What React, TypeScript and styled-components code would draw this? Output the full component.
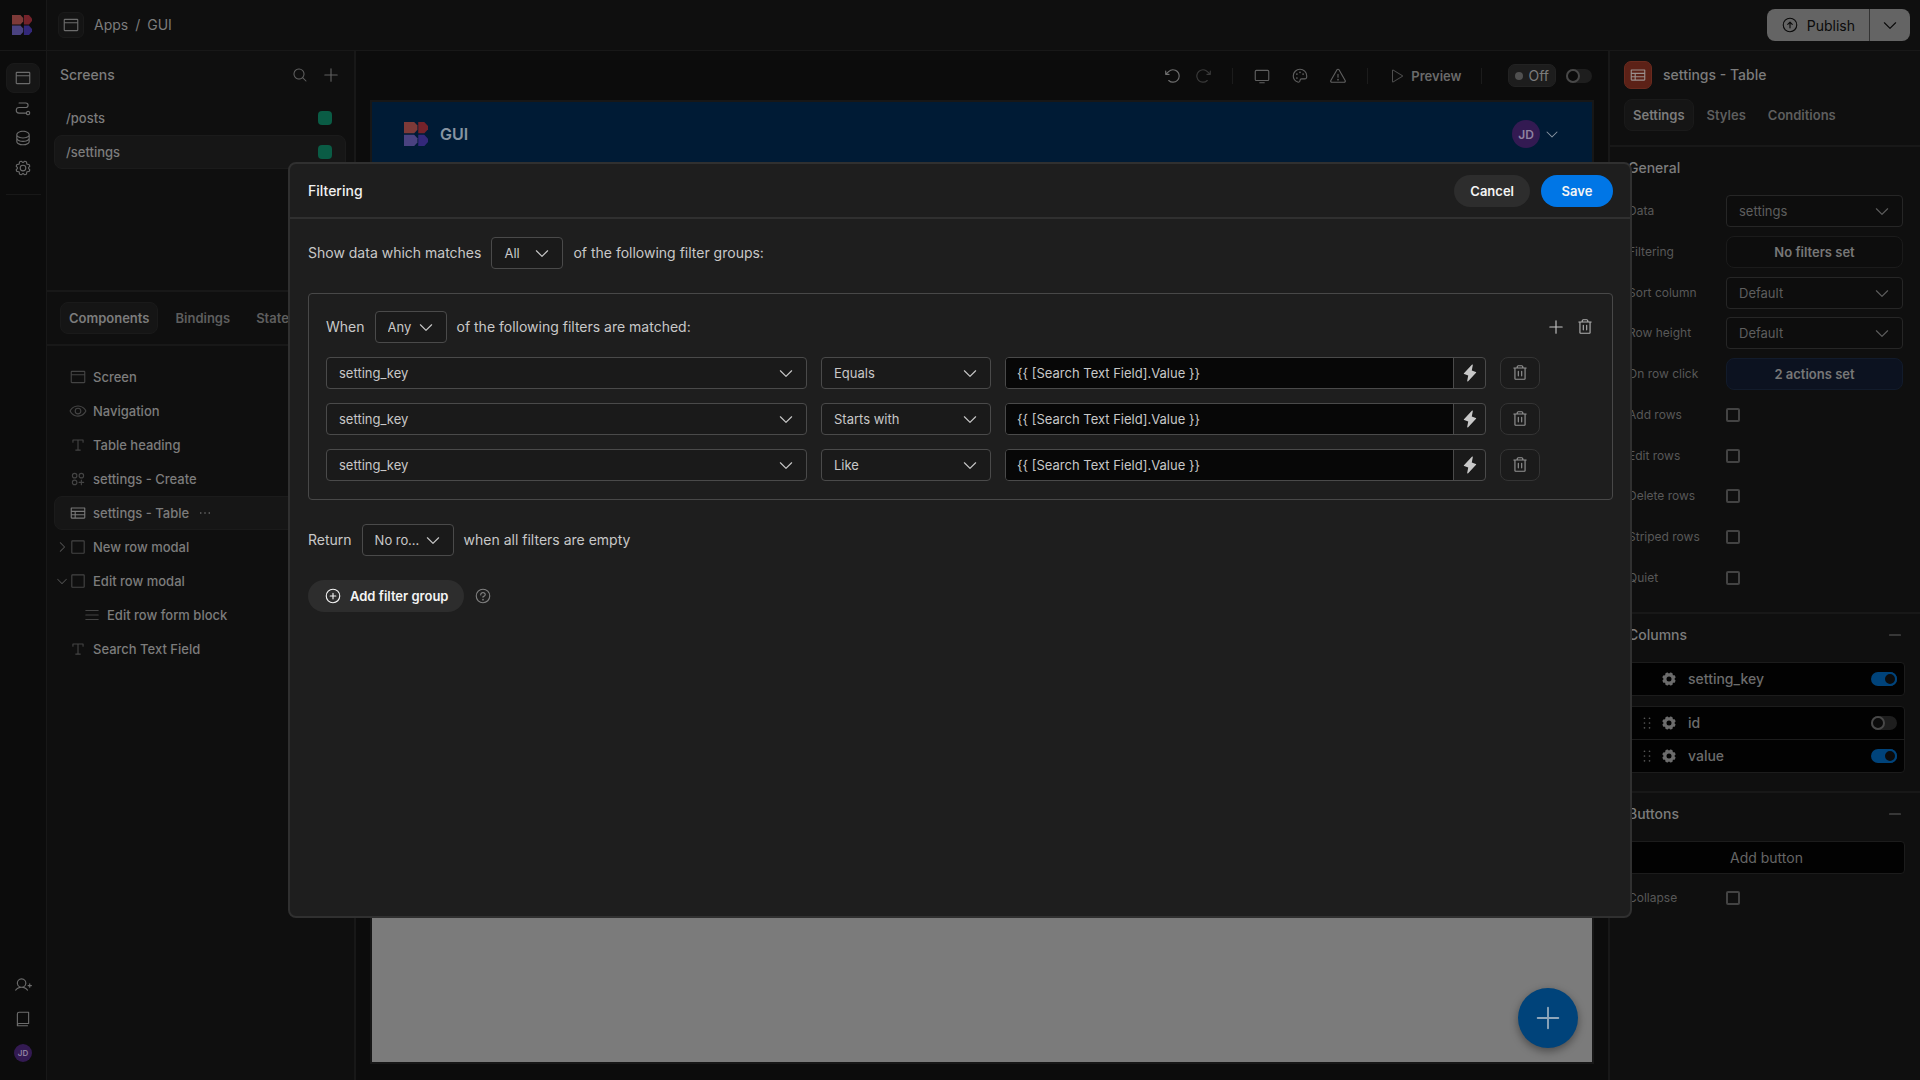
import React from "react";
import styled, { createGlobalStyle, css } from "styled-components";
import {
  PiBrowser, PiPath, PiDatabase, PiGear, PiMagnifyingGlass, PiPlus, PiEye, PiTextT,
  PiCirclesThreePlus, PiTable, PiSquare, PiCaretRight, PiCaretDown, PiList, PiUserPlus,
  PiBook, PiArrowCounterClockwise, PiArrowClockwise, PiMonitor, PiPalette, PiWarning,
  PiPlay, PiArrowCircleUp, PiTrash, PiPlusCircle, PiQuestion, PiDotsThree, PiMinus,
  PiLightningFill, PiGearFill, PiDotsSixVertical,
} from "react-icons/pi";

const Global = createGlobalStyle`
  *, *::before, *::after { box-sizing: border-box; }
  body { margin: 0; background: #0b0b0b; overflow: hidden; }
  body, button, input, select { font-family: Inter, "Liberation Sans", sans-serif; }
  button, input, select { margin: 0; font-size: 13px; color: inherit; }
  button { display: flex; align-items: center; justify-content: center; padding: 0; background: none; border: 0; cursor: pointer; }
  h1, h2, ul, p { margin: 0; padding: 0; font-weight: 500; list-style: none; }
  svg { flex: none; }
`;

const line = "#181818";

const Shell = styled.div`
  display: grid;
  grid-template-columns: 47px 1fr;
  height: 100vh;
  color: #7c7c7c;
  font-size: 14px;
  line-height: 18px;
`;

/* ---------- Navigation rail ---------- */

const Rail = styled.nav`
  display: flex;
  flex-direction: column;
  align-items: center;
  background: #0c0c0c;
  border-right: 1px solid ${line};
  padding-bottom: 18px;
`;
const RailLogo = styled.div`
  display: flex;
  align-items: center;
  justify-content: center;
  align-self: stretch;
  height: 51px;
  padding-right: 2px;
  border-bottom: 1px solid ${line};
  margin-bottom: 12px;
`;
const RailButton = styled.button<{ $active?: boolean }>`
  width: 34px;
  height: 30px;
  border-radius: 8px;
  border: 1px solid transparent;
  color: #6c6c6c;
  font-size: 18px;
  ${(p) => p.$active && css`background: #161616; border-color: #1a1a1a;`}
`;
const RailRule = styled.div`
  width: 35px;
  height: 1px;
  margin: 11px 0 auto;
  background: ${line};
`;
const RailFoot = styled.div`
  display: flex;
  flex-direction: column;
  align-items: center;
  gap: 4px;
  & > span { margin-top: 6px; }
`;
const Avatar = styled.span<{ $size: number }>`
  display: flex;
  align-items: center;
  justify-content: center;
  width: ${(p) => p.$size}px;
  height: ${(p) => p.$size}px;
  border-radius: 50%;
  background: #331a52;
  color: #8e82a0;
  font-size: ${(p) => (p.$size > 20 ? 12 : 8)}px;
  font-weight: 600;
`;

/* ---------- Top bar ---------- */

const Main = styled.div`
  display: flex;
  flex-direction: column;
  min-width: 0;
`;
const TopBar = styled.header`
  display: flex;
  align-items: center;
  justify-content: space-between;
  flex: none;
  height: 51px;
  padding: 0 10px 0 11px;
  background: #0f0f0f;
  border-bottom: 1px solid ${line};
`;
const Crumbs = styled.div`
  display: flex;
  align-items: center;
  gap: 7px;
`;
const CrumbIcon = styled.span`
  display: flex;
  align-items: center;
  justify-content: center;
  width: 26px;
  height: 26px;
  margin-right: 3px;
  border: 1px solid #1a1a1a;
  border-radius: 6px;
  background: #141414;
  font-size: 18px;
  color: #6c6c6c;
`;
const CrumbLink = styled.a`
  color: #7c7c7c;
  text-decoration: none;
`;
const PublishGroup = styled.div`
  display: flex;
  border-radius: 8px;
  overflow: hidden;
  background: #646464;
  color: #0a0a0a;
`;
const PublishButton = styled.button`
  gap: 8px;
  height: 32px;
  padding: 0 14px;
  font-size: 14px;
  & > svg { font-size: 18px; }
  & + & { padding: 0 11px; border-left: 1px solid #333; }
`;

const Workspace = styled.div`
  display: grid;
  grid-template-columns: 309px 1fr 312px;
  flex: 1;
  min-height: 0;
`;

/* ---------- Left panel ---------- */

const LeftPanel = styled.aside`
  display: flex;
  flex-direction: column;
  min-height: 0;
  background: #0f0f0f;
  border-right: 2px solid ${line};
`;
const Screens = styled.section`
  height: 241px;
  border-bottom: 2px solid ${line};
`;
const PanelHead = styled.div`
  display: flex;
  align-items: center;
  gap: 14px;
  height: 48px;
  padding: 0 14px 0 13px;
  margin-bottom: 2px;
`;
const PanelTitle = styled.h2`
  flex: 1;
  font-size: 14px;
`;
const IconButton = styled.button<{ $tone?: string }>`
  font-size: 18px;
  color: ${(p) => p.$tone ?? "#606060"};
`;
const List = styled.ul`
  padding: 0 8px 0 7px;
`;
const ScreenRow = styled.li<{ $active?: boolean }>`
  display: flex;
  align-items: center;
  justify-content: space-between;
  height: 34px;
  padding: 0 13px 0 11px;
  border: 1px solid transparent;
  border-radius: 8px;
  font-size: 13px;
  ${(p) => p.$active && css`background: #161616; border-color: #1b1b1b;`}
`;
const Swatch = styled.span`
  width: 14px;
  height: 14px;
  border-radius: 4px;
  background: #0a5c45;
`;
const Tabs = styled.div`
  display: flex;
  gap: 8px;
  padding: 10px 13px;
  border-bottom: 2px solid ${line};
`;
const Tab = styled.button<{ $active?: boolean }>`
  height: 32px;
  padding: 0 8px;
  border: 1px solid transparent;
  border-radius: 8px;
  font-weight: 600;
  color: #5e5e5e;
  ${(p) => p.$active && css`color: #7c7c7c; background: #151515; border-color: #1a1a1a;`}
`;
const Tree = styled(List)`
  padding-top: 14px;
`;
const TreeRow = styled.li<{ $active?: boolean; $depth?: number }>`
  display: flex;
  align-items: center;
  height: 34px;
  padding-left: ${(p) => (p.$depth ?? 0) * 14}px;
  border: 1px solid transparent;
  border-radius: 8px;
  font-size: 13px;
  ${(p) => p.$active && css`background: #161616; border-color: #1b1b1b;`}
`;
const Twisty = styled.span`
  display: flex;
  width: 14px;
  font-size: 14px;
  color: #505050;
`;
const NodeIcon = styled.span<{ $bright?: boolean }>`
  display: flex;
  margin-right: 6px;
  font-size: 18px;
  color: ${(p) => (p.$bright ? "#777" : "#444")};
`;
const NodeMore = styled.span`
  display: flex;
  margin-left: 8px;
  font-size: 16px;
`;

/* ---------- Canvas ---------- */

const CanvasArea = styled.main`
  display: flex;
  flex-direction: column;
  min-width: 0;
  padding: 0 14px 16px;
  background: #0c0c0c;
`;
const Toolbar = styled.div`
  display: flex;
  align-items: center;
  justify-content: flex-end;
  height: 49px;
  padding-right: 2px;
`;
const ToolGroup = styled.div<{ $gap: number }>`
  display: flex;
  align-items: center;
  gap: ${(p) => p.$gap}px;
`;
const ToolRule = styled.span`
  width: 1px;
  height: 16px;
  margin: 0 20px;
  background: #1c1c1c;
`;
const PreviewButton = styled.button`
  gap: 7px;
  font-weight: 600;
  color: #6a6a6a;
  & > svg { font-size: 16px; color: #4e4e4e; }
`;
const OffBadge = styled.span`
  display: flex;
  align-items: center;
  gap: 5px;
  height: 23px;
  padding: 0 6px;
  margin: 0 10px 0 6px;
  border-radius: 7px;
  border: 1px solid #222;
  background: #1d1d1d;
  &::before { content: ""; width: 8px; height: 8px; border-radius: 50%; background: #505050; }
`;
const Toggle = styled.input.attrs({ type: "checkbox", role: "switch" })`
  appearance: none;
  display: flex;
  flex: none;
  width: 26px;
  height: 14px;
  border-radius: 7px;
  background: #1e1e1e;
  &::before {
    content: "";
    width: 14px;
    height: 14px;
    border: 2px solid #484848;
    border-radius: 50%;
    background: #0b0b0b;
  }
  &:checked { background: #00437a; justify-content: flex-end; }
  &:checked::before { border-color: #00437a; }
`;
const Device = styled.div`
  position: relative;
  flex: 1;
  border: 2px solid #171717;
  background: #7b7b7b;
`;
const AppHeader = styled.div`
  display: flex;
  align-items: center;
  gap: 12px;
  height: 64px;
  padding: 0 32px;
  background: #001b35;
  color: #8794a1;
  font-size: 16px;
  font-weight: 600;
`;
const UserMenu = styled.button`
  gap: 4px;
  margin-left: auto;
  font-size: 16px;
`;
const Fab = styled.button`
  position: absolute;
  right: 14px;
  bottom: 14px;
  width: 60px;
  height: 60px;
  border-radius: 50%;
  background: #00437a;
  color: #8fa6ba;
  font-size: 30px;
  box-shadow: 0 3px 8px rgba(0, 0, 0, 0.4);
`;

/* ---------- Settings panel ---------- */

const RightPanel = styled.aside`
  min-height: 0;
  background: #0f0f0f;
  border-left: 2px solid ${line};
`;
const ComponentHead = styled.div`
  display: flex;
  align-items: center;
  gap: 11px;
  padding: 10px 14px 0;
`;
const ComponentIcon = styled.span`
  display: flex;
  align-items: center;
  justify-content: center;
  width: 28px;
  height: 28px;
  border: 1px solid #6a2a1e;
  border-radius: 7px;
  background: #5c2117;
  color: #9a8f8d;
  font-size: 18px;
`;
const ComponentTabs = styled(Tabs)`
  gap: 4px;
  padding: 10px 14px 14px;
`;
const Section = styled.section`
  padding: 0 15px 18px 18px;
  border-bottom: 2px solid ${line};
  &:last-child { border-bottom: 0; }
`;
const SectionHead = styled.div`
  display: flex;
  align-items: center;
  justify-content: space-between;
  height: 42px;
  padding-right: 2px;
  margin-bottom: 6px;
`;
const Fields = styled.div`
  display: flex;
  flex-direction: column;
  justify-content: space-between;
  min-height: 399px;
`;
const Field = styled.div`
  display: grid;
  grid-template-columns: 98px 1fr;
  align-items: center;
  min-height: 32px;
  padding-right: 2px;
`;
const FieldLabel = styled.label`
  font-size: 12px;
  color: #585858;
`;
const Checkbox = styled.input.attrs({ type: "checkbox" })`
  appearance: none;
  width: 14px;
  height: 14px;
  border: 2px solid #434343;
  border-radius: 2px;
`;
const FieldButton = styled.button<{ $blue?: boolean }>`
  height: 32px;
  border: 1px solid ${(p) => (p.$blue ? "#121b2b" : "#1b1b1b")};
  border-radius: 8px;
  background: ${(p) => (p.$blue ? "#0c1220" : "#0d0d0d")};
  color: #777;
  font-weight: 600;
`;
const ColumnList = styled.ul`
  margin-bottom: 10px;
  border: 1px solid #1c1c1c;
  border-radius: 4px;
  background: #020202;
  &:last-child { margin-bottom: 0; }
`;
const ColumnRow = styled.li`
  display: flex;
  align-items: center;
  height: 32px;
  padding: 0 7px 0 9px;
  & + & { height: 33px; border-top: 1px solid #1c1c1c; }
`;
const Grip = styled.span`
  display: flex;
  width: 23px;
  font-size: 18px;
  color: #555;
`;
const ColumnName = styled.label`
  flex: 1;
  padding-left: 11px;
  color: #6c6c6c;
`;
const AddButton = styled.button`
  width: 100%;
  height: 33px;
  margin-bottom: 8px;
  border: 1px solid #1c1c1c;
  border-radius: 4px;
  background: #020202;
  font-size: 14px;
  color: #666;
`;

/* ---------- Select ---------- */

const SelectBox = styled.div<{ $width?: number; $dim?: boolean }>`
  display: grid;
  align-items: center;
  width: ${(p) => (p.$width ? `${p.$width}px` : "auto")};
  color: ${(p) => (p.$dim ? "#5e5e5e" : "#c8c8c8")};
  & > * { grid-area: 1 / 1; }
  & > svg { justify-self: end; margin-right: 12px; font-size: 18px; pointer-events: none; }
  & > select {
    appearance: none;
    width: 100%;
    height: 32px;
    padding: 0 32px 0 12px;
    border: 1px solid ${(p) => (p.$dim ? "#262626" : "#4a4a4a")};
    border-radius: 4px;
    background: ${(p) => (p.$dim ? "#0d0d0d" : "#1a1a1a")};
    text-overflow: ellipsis;
  }
`;

/* ---------- Modal ---------- */

const Overlay = styled.div`
  position: fixed;
  inset: 0;
  display: flex;
  align-items: center;
  justify-content: center;
`;
const Dialog = styled.div`
  width: 70vw;
  height: 70vh;
  border: 2px solid #303030;
  border-radius: 8px;
  background: #1e1e1e;
  color: #c8c8c8;
  font-size: 14px;
  line-height: 18px;
`;
const DialogHead = styled.div`
  display: flex;
  align-items: center;
  gap: 11px;
  height: 55px;
  padding: 0 17px 0 18px;
  border-bottom: 2px solid #303030;
`;
const DialogTitle = styled.h1`
  flex: 1;
  font-size: 14px;
  color: #f0f0f0;
`;
const Pill = styled.button<{ $primary?: boolean }>`
  gap: 8px;
  min-width: 72px;
  height: 32px;
  padding: 0 16px;
  border-radius: 16px;
  background: ${(p) => (p.$primary ? "#0076e6" : "#2d2d2d")};
  color: #f4f4f4;
  font-weight: 600;
  & > svg { font-size: 18px; }
`;
const DialogBody = styled.div`
  display: flex;
  flex-direction: column;
  gap: 24px;
  padding: 18px 17px 18px 18px;
`;
const Sentence = styled.div`
  display: flex;
  align-items: center;
  gap: 10px;
`;
const Group = styled.div`
  display: flex;
  flex-direction: column;
  gap: 14px;
  padding: 17px 18px 18px 17px;
  border: 1px solid #484848;
  border-radius: 4px;
`;
const GroupActions = styled.div`
  display: flex;
  gap: 11px;
  margin-left: auto;
`;
const Filter = styled.div`
  display: grid;
  grid-template-columns: 1fr 170px 1fr 40px 40px;
  gap: 14px;
`;
const Binding = styled.div`
  display: flex;
  height: 32px;
  border: 1px solid #4a4a4a;
  border-radius: 4px;
  background: #1a1a1a;
  overflow: hidden;
  & > input {
    flex: 1;
    min-width: 0;
    padding: 0 11px;
    border: 0;
    background: #070707;
  }
  & > button { width: 32px; border-left: 1px solid #4a4a4a; font-size: 18px; }
`;
const TrashButton = styled.button`
  height: 32px;
  border: 1px solid #343434;
  border-radius: 8px;
  background: #1b1b1b;
  font-size: 18px;
  color: #949494;
`;

/* ---------- Pieces ---------- */

function Logo({ size }: { size: number }) {
  return (
    <svg width={size} height={size} viewBox="0 0 20 20" aria-hidden="true">
      <path d="M0 0h8.5L11.2 3v3.4L8.5 9.4H0z" fill="#7d3a38" />
      <path d="M11.9 0h5L20 3.4v2.6L17 9.4h-5.1z" fill="#74222a" />
      <path d="M0 10.6h8.5l2.7 3V17l-2.7 3H0z" fill="#4a4280" />
      <path d="M11.9 10.6h5L20 14v2.6L17 20h-5.1z" fill="#33287a" />
    </svg>
  );
}

type SelectProps = { label: string; value: string; id?: string; width?: number; dim?: boolean };
function Select({ label, value, id, width, dim }: SelectProps) {
  return (
    <SelectBox $width={width} $dim={dim}>
      <select id={id} aria-label={label} defaultValue={value}>
        <option>{value}</option>
      </select>
      <PiCaretDown />
    </SelectBox>
  );
}

const nodes = [
  { name: "Screen", icon: <PiBrowser /> },
  { name: "Navigation", icon: <PiEye /> },
  { name: "Table heading", icon: <PiTextT /> },
  { name: "settings - Create", icon: <PiCirclesThreePlus /> },
  { name: "settings - Table", icon: <PiTable />, active: true },
  { name: "New row modal", icon: <PiSquare />, twisty: <PiCaretRight /> },
  { name: "Edit row modal", icon: <PiSquare />, twisty: <PiCaretDown /> },
  { name: "Edit row form block", icon: <PiList />, depth: 1 },
  { name: "Search Text Field", icon: <PiTextT /> },
];

const flags = ["Add rows", "Edit rows", "Delete rows", "Striped rows", "Quiet"];

function CheckField({ name }: { name: string }) {
  return (
    <Field>
      <FieldLabel htmlFor={name}>{name}</FieldLabel>
      <Checkbox id={name} />
    </Field>
  );
}

function Column({ name, on, fixed }: { name: string; on?: boolean; fixed?: boolean }) {
  return (
    <ColumnRow>
      <Grip>{!fixed && <PiDotsSixVertical />}</Grip>
      <IconButton aria-label={`Edit ${name}`} $tone="#6c6c6c"><PiGearFill size={16} /></IconButton>
      <ColumnName htmlFor={`col-${name}`}>{name}</ColumnName>
      <Toggle id={`col-${name}`} defaultChecked={on} />
    </ColumnRow>
  );
}

export default function App() {
  return (
    <>
      <Global />
      <Shell>
        <Rail>
          <RailLogo><Logo size={20} /></RailLogo>
          <RailButton $active aria-label="Design"><PiBrowser /></RailButton>
          <RailButton aria-label="Automations"><PiPath /></RailButton>
          <RailButton aria-label="Data"><PiDatabase /></RailButton>
          <RailButton aria-label="Settings"><PiGear /></RailButton>
          <RailRule />
          <RailFoot>
            <RailButton aria-label="Invite"><PiUserPlus /></RailButton>
            <RailButton aria-label="Docs"><PiBook /></RailButton>
            <Avatar $size={18}>JD</Avatar>
          </RailFoot>
        </Rail>

        <Main>
          <TopBar>
            <Crumbs>
              <CrumbIcon><PiBrowser /></CrumbIcon>
              <CrumbLink href="#apps">Apps</CrumbLink>
              <span>/</span>
              <span>GUI</span>
            </Crumbs>
            <PublishGroup>
              <PublishButton><PiArrowCircleUp />Publish</PublishButton>
              <PublishButton aria-label="Publish options"><PiCaretDown /></PublishButton>
            </PublishGroup>
          </TopBar>

          <Workspace>
            <LeftPanel>
              <Screens>
                <PanelHead>
                  <PanelTitle>Screens</PanelTitle>
                  <IconButton aria-label="Search"><PiMagnifyingGlass size={16} /></IconButton>
                  <IconButton aria-label="Add screen"><PiPlus /></IconButton>
                </PanelHead>
                <List>
                  <ScreenRow>/posts<Swatch /></ScreenRow>
                  <ScreenRow $active>/settings<Swatch /></ScreenRow>
                </List>
              </Screens>
              <Tabs>
                <Tab $active>Components</Tab>
                <Tab>Bindings</Tab>
                <Tab>State</Tab>
              </Tabs>
              <Tree>
                {nodes.map((n) => (
                  <TreeRow key={n.name} $active={n.active} $depth={n.depth}>
                    <Twisty>{n.twisty}</Twisty>
                    <NodeIcon $bright={n.active}>{n.icon}</NodeIcon>
                    {n.name}
                    {n.active && <NodeMore><PiDotsThree /></NodeMore>}
                  </TreeRow>
                ))}
              </Tree>
            </LeftPanel>

            <CanvasArea>
              <Toolbar>
                <ToolGroup $gap={12}>
                  <IconButton aria-label="Undo" $tone="#707070"><PiArrowCounterClockwise /></IconButton>
                  <IconButton aria-label="Redo" $tone="#3a3a3a"><PiArrowClockwise /></IconButton>
                </ToolGroup>
                <ToolRule />
                <ToolGroup $gap={20}>
                  <IconButton aria-label="Screen size"><PiMonitor /></IconButton>
                  <IconButton aria-label="Theme"><PiPalette /></IconButton>
                  <IconButton aria-label="Errors"><PiWarning /></IconButton>
                </ToolGroup>
                <ToolRule />
                <PreviewButton><PiPlay />Preview</PreviewButton>
                <ToolRule />
                <OffBadge>Off</OffBadge>
                <Toggle aria-label="Live" />
              </Toolbar>
              <Device>
                <AppHeader>
                  <Logo size={24} />
                  GUI
                  <UserMenu aria-label="User menu"><Avatar $size={28}>JD</Avatar><PiCaretDown /></UserMenu>
                </AppHeader>
                <Fab aria-label="Add"><PiPlus /></Fab>
              </Device>
            </CanvasArea>

            <RightPanel>
              <ComponentHead>
                <ComponentIcon><PiTable /></ComponentIcon>
                <PanelTitle>settings - Table</PanelTitle>
              </ComponentHead>
              <ComponentTabs>
                <Tab $active>Settings</Tab>
                <Tab>Styles</Tab>
                <Tab>Conditions</Tab>
              </ComponentTabs>
              <Section>
                <SectionHead><PanelTitle>General</PanelTitle></SectionHead>
                <Fields>
                  <Field>
                    <FieldLabel htmlFor="data">Data</FieldLabel>
                    <Select id="data" label="Data" value="settings" dim />
                  </Field>
                  <Field>
                    <FieldLabel htmlFor="filtering">Filtering</FieldLabel>
                    <FieldButton id="filtering">No filters set</FieldButton>
                  </Field>
                  <Field>
                    <FieldLabel htmlFor="sort">Sort column</FieldLabel>
                    <Select id="sort" label="Sort column" value="Default" dim />
                  </Field>
                  <Field>
                    <FieldLabel htmlFor="height">Row height</FieldLabel>
                    <Select id="height" label="Row height" value="Default" dim />
                  </Field>
                  <Field>
                    <FieldLabel htmlFor="click">On row click</FieldLabel>
                    <FieldButton id="click" $blue>2 actions set</FieldButton>
                  </Field>
                  {flags.map((f) => <CheckField key={f} name={f} />)}
                </Fields>
              </Section>
              <Section>
                <SectionHead>
                  <PanelTitle>Columns</PanelTitle>
                  <IconButton aria-label="Collapse columns"><PiMinus size={16} /></IconButton>
                </SectionHead>
                <ColumnList><Column name="setting_key" on fixed /></ColumnList>
                <ColumnList>
                  <Column name="id" />
                  <Column name="value" on />
                </ColumnList>
              </Section>
              <Section>
                <SectionHead>
                  <PanelTitle>Buttons</PanelTitle>
                  <IconButton aria-label="Collapse buttons"><PiMinus size={16} /></IconButton>
                </SectionHead>
                <AddButton>Add button</AddButton>
                <CheckField name="Collapse" />
              </Section>
            </RightPanel>
          </Workspace>
        </Main>
      </Shell>

      <Overlay>
        <Dialog role="dialog" aria-modal="true" aria-labelledby="dialog-title">
          <DialogHead>
            <DialogTitle id="dialog-title">Filtering</DialogTitle>
            <Pill>Cancel</Pill>
            <Pill $primary>Save</Pill>
          </DialogHead>
          <DialogBody>
            <Sentence>
              Show data which matches
              <Select label="Group operator" value="All" width={72} />
              of the following filter groups:
            </Sentence>
            <Group>
              <Sentence>
                When
                <Select label="Filter operator" value="Any" width={72} />
                of the following filters are matched:
                <GroupActions>
                  <IconButton aria-label="Add filter" $tone="#c4c4c4"><PiPlus /></IconButton>
                  <IconButton aria-label="Delete group" $tone="#b0b0b0"><PiTrash /></IconButton>
                </GroupActions>
              </Sentence>
              {["Equals", "Starts with", "Like"].map((op) => (
                <Filter key={op}>
                  <Select label="Column" value="setting_key" />
                  <Select label="Operator" value={op} />
                  <Binding>
                    <input aria-label="Value" defaultValue="{{ [Search Text Field].Value }}" />
                    <button aria-label="Bind value"><PiLightningFill /></button>
                  </Binding>
                  <TrashButton aria-label="Delete filter"><PiTrash /></TrashButton>
                </Filter>
              ))}
            </Group>
            <Sentence>
              Return
              <Select label="Empty behaviour" value="No rows" width={92} />
              when all filters are empty
            </Sentence>
            <Sentence>
              <Pill><PiPlusCircle />Add filter group</Pill>
              <IconButton aria-label="Help" $tone="#808080"><PiQuestion /></IconButton>
            </Sentence>
          </DialogBody>
        </Dialog>
      </Overlay>
    </>
  );
}
